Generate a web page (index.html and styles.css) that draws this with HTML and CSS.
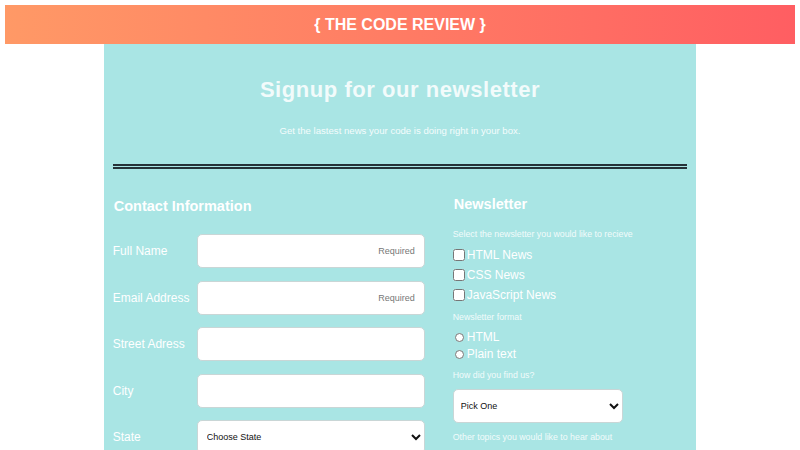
FILE: index.html
```html
<!DOCTYPE html>
<html>
<head>
<meta charset="utf-8">
<link rel="stylesheet" href="styles.css">
</head>
<body>
<header class="topbar">{ THE CODE REVIEW }</header>
<main class="card">
  <h1 class="title">Signup for our newsletter</h1>
  <p class="subtitle">Get the lastest news your code is doing right in your box.</p>
  <div class="rule"></div>
  <form class="cols">
    <section class="contact">
      <h2 class="heading">Contact Information</h2>
      <div class="rows">
        <label class="row"><span class="lbl">Full Name</span><input class="field" type="text" placeholder="Required"></label>
        <label class="row"><span class="lbl">Email Address</span><input class="field" type="text" placeholder="Required"></label>
        <label class="row"><span class="lbl">Street Adress</span><input class="field" type="text"></label>
        <label class="row"><span class="lbl">City</span><input class="field" type="text"></label>
        <label class="row"><span class="lbl">State</span><select class="field sel"><option>Choose State</option></select></label>
      </div>
    </section>
    <section class="news">
      <h2 class="heading nh">Newsletter</h2>
      <p class="small s1">Select the newsletter you would like to recieve</p>
      <div class="checks">
        <label class="chk"><input type="checkbox" class="box">HTML News</label>
        <label class="chk"><input type="checkbox" class="box">CSS News</label>
        <label class="chk"><input type="checkbox" class="box">JavaScript News</label>
      </div>
      <p class="small s2">Newsletter format</p>
      <div class="radios">
        <label class="rad"><input type="radio" name="f" class="dot">HTML</label>
        <label class="rad"><input type="radio" name="f" class="dot">Plain text</label>
      </div>
      <p class="small s3">How did you find us?</p>
      <select class="pick"><option>Pick One</option></select>
      <p class="small s4">Other topics you would like to hear about</p>
      <textarea class="topics"></textarea>
    </section>
  </form>
</main>
</body>
</html>
```
FILE: styles.css
```css
html, body {
  margin: 0;
  padding: 0;
  background: #ffffff;
  overflow: hidden;
}
html {
  height: 450px;
}
body {
  padding: 5px;
  font-family: "Liberation Sans", Arial, sans-serif;
  height: 440px;
}
.topbar {
  height: 39px;
  line-height: 40px;
  background: linear-gradient(90deg, #ff9966 0%, #ff5e62 100%);
  color: #ffffff;
  text-align: center;
  font-weight: bold;
  font-size: 16px;
}
.card {
  width: 75%;
  margin: 0 auto;
  background: #a9e5e4;
  padding: 1px 9px 0;
  box-sizing: border-box;
  height: 420px;
  overflow: hidden;
}
.title {
  margin: 32px 0 0;
  text-align: center;
  font-size: 22px;
  line-height: 26px;
  letter-spacing: 0.55px;
  color: #f2fbfb;
  font-weight: bold;
}
.subtitle {
  margin: 21px 0 0;
  text-align: center;
  font-size: 9.6px;
  line-height: 14px;
  color: #f4fcfc;
}
.rule {
  margin-top: 26px;
  height: 0;
  border-top: 5px double #253238;
}
.cols {
  display: grid;
  grid-template-columns: 340px 1fr;
}
.heading {
  margin: 28px 0 0 1px;
  font-size: 14.5px;
  line-height: 18px;
  color: #ffffff;
  font-weight: bold;
}
.nh {
  margin-top: 26px;
}
.rows {
  margin-top: 19px;
  display: flex;
  flex-direction: column;
  gap: 12.6px;
}
.row {
  display: flex;
  align-items: center;
}
.lbl {
  width: 84px;
  font-size: 12px;
  color: #ffffff;
}
.field {
  width: 228px;
  height: 34px;
  box-sizing: border-box;
  border: 1px solid #c9d6d6;
  border-radius: 5px;
  background: #ffffff;
  font-family: "Liberation Sans", Arial, sans-serif;
  font-size: 9px;
  text-align: right;
  padding: 0 9px;
  margin: 0;
}
.field::placeholder {
  color: #777777;
}
.sel {
  text-align: left;
  padding: 0 5px;
  color: #111111;
}
.small {
  margin: 0;
  font-size: 8.8px;
  line-height: 12px;
  color: #f2fbfb;
}
.s1 { margin-top: 15px; }
.checks { margin-top: 5px; }
.chk, .rad {
  display: flex;
  align-items: center;
  font-size: 12px;
  color: #ffffff;
}
.chk { height: 20px; }
.rad { height: 17px; }
.box {
  width: 12px;
  height: 12px;
  margin: 0 2px 0 0;
}
.dot {
  width: 9px;
  height: 9px;
  margin: 0 3px 0 2px;
}
.s2 { margin-top: 6px; }
.radios { margin-top: 5.5px; }
.s3 { margin-top: 6.5px; }
.pick {
  display: block;
  margin-top: 8px;
  width: 170px;
  height: 34px;
  box-sizing: border-box;
  border: 1px solid #c9d6d6;
  border-radius: 5px;
  background: #ffffff;
  font-family: "Liberation Sans", Arial, sans-serif;
  font-size: 9px;
  padding: 0 3px;
  color: #111111;
}
.s4 { margin-top: 8px; }
.topics {
  display: block;
  margin-top: 7px;
  width: 233px;
  height: 60px;
  box-sizing: border-box;
  border: 1px solid #c9d6d6;
  border-radius: 5px;
  background: #ffffff;
}
```
